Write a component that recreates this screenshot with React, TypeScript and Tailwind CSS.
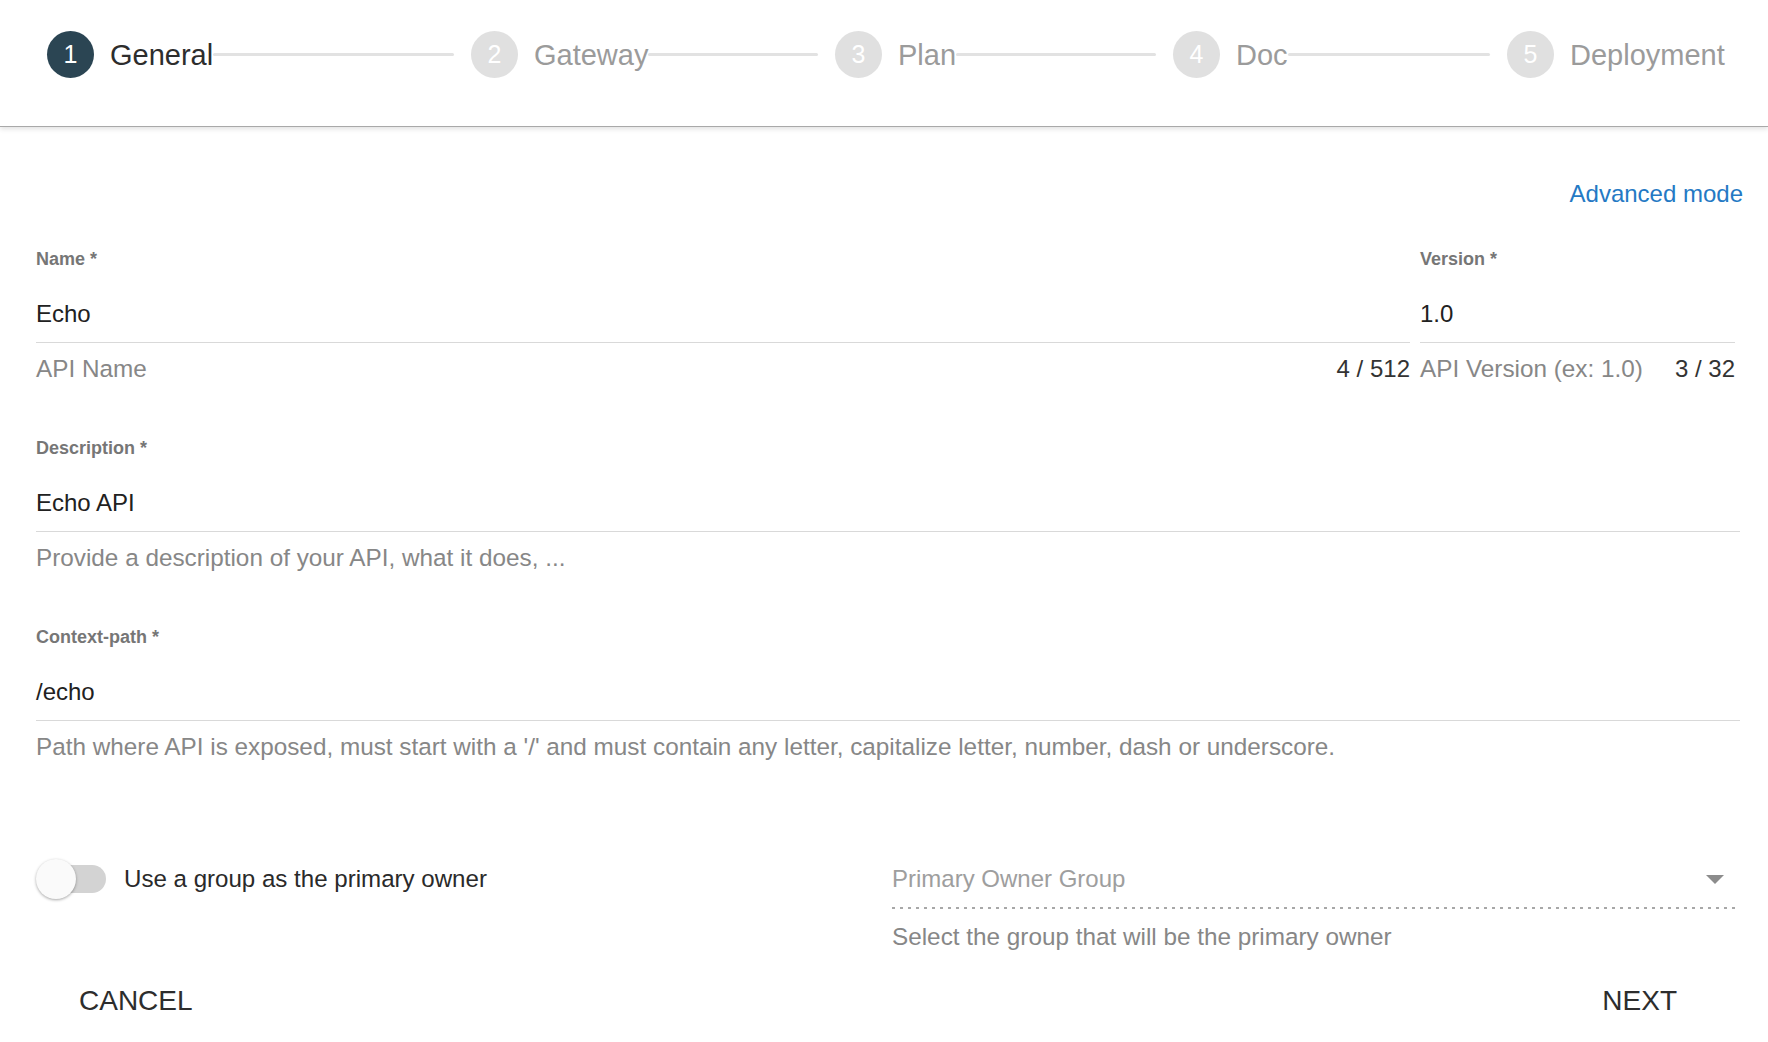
import React from "react";

const steps = [
  { n: 1, label: "General", active: true, w: "w-[424px]" },
  { n: 2, label: "Gateway", active: false, w: "w-[364px]" },
  { n: 3, label: "Plan", active: false, w: "w-[338px]" },
  { n: 4, label: "Doc", active: false, w: "w-[334px]" },
  { n: 5, label: "Deployment", active: false, w: "" },
];

function Stepper() {
  return (
    <header className="h-[127px] pt-[31px] pl-[47px] pr-[36px] flex items-start border-b border-[#a9a9a9] shadow-[0_2px_5px_rgba(0,0,0,0.12)] bg-white">
      {steps.map((s, i) => (
        <div key={s.n} className={`flex items-center shrink-0 ${s.w}`}>
          <div
            className={`w-[47px] h-[47px] rounded-full flex items-center justify-center text-white text-[25px] shrink-0 ${
              s.active ? "bg-[#2b4553]" : "bg-[#e0e0e0]"
            }`}
          >
            {s.n}
          </div>
          <span
            className={`ml-4 text-[29px] leading-[34px] whitespace-nowrap ${
              s.active ? "text-[#2d2d2d]" : "text-[#9b9b9b]"
            }`}
          >
            {s.label}
          </span>
          {i < steps.length - 1 && <div className="flex-1 h-[3px] bg-[#e2e2e2] mr-[17px] rounded-full" />}
        </div>
      ))}
    </header>
  );
}

function Field({
  label,
  value,
  hint,
  counter,
  className = "",
}: {
  label: string;
  value: string;
  hint: string;
  counter?: string;
  className?: string;
}) {
  return (
    <div className={className}>
      <div className="text-[18px] leading-[22px] font-bold text-[#767676]">{label}</div>
      <div className="mt-[29px] pb-[13px] border-b border-[#d9d9d9] text-[24px] leading-[30px] text-[#212121]">
        {value}
      </div>
      <div className="mt-[11px] flex justify-between text-[24.3px] leading-[30px] text-[#878787]">
        <span className="whitespace-nowrap">{hint}</span>
        {counter && <span className="text-[#333333] text-[24px] whitespace-nowrap">{counter}</span>}
      </div>
    </div>
  );
}

export default function App() {
  return (
    <div className="min-h-screen bg-white font-['Liberation_Sans',Arial,sans-serif]">
      <Stepper />

      <main className="pt-[53px] pl-9 pr-7">
        <div className="flex justify-end">
          <a className="text-[24px] leading-[28px] text-[#2479c4] cursor-pointer mr-[-3px]">Advanced mode</a>
        </div>

        <div className="mt-10 flex gap-[10px]">
          <Field className="flex-1" label="Name *" value="Echo" hint="API Name" counter="4 / 512" />
          <Field className="w-[320px] pr-[5px]" label="Version *" value="1.0" hint="API Version (ex: 1.0)" counter="3 / 32" />
        </div>

        <Field className="mt-[53px]" label="Description *" value="Echo API" hint="Provide a description of your API, what it does, ..." />

        <Field
          className="mt-[53px]"
          label="Context-path *"
          value="/echo"
          hint="Path where API is exposed, must start with a '/' and must contain any letter, capitalize letter, number, dash or underscore."
        />

        <div className="mt-[102px] grid grid-cols-2 gap-2">
          <div className="flex items-start">
            <div className="flex items-center h-[30px]">
              <div className="relative w-[70px] h-10">
                <div className="absolute left-1 top-[6px] w-[66px] h-7 rounded-full bg-[#d3d3d3]" />
                <div className="absolute left-0 top-0 w-10 h-10 rounded-full bg-[#fafafa] shadow-[0_1px_3px_rgba(0,0,0,0.35)]" />
              </div>
              <span className="ml-[18px] text-[24.1px] leading-[30px] text-[#2a2a2a]">Use a group as the primary owner</span>
            </div>
          </div>

          <div>
            <div className="flex items-center justify-between text-[24px] leading-[30px] text-[#9e9e9e]">
              <span>Primary Owner Group</span>
              <span className="mr-[16px] w-0 h-0 border-l-[9px] border-r-[9px] border-t-[9px] border-l-transparent border-r-transparent border-t-[#8c8c8c]" />
            </div>
            <div className="mt-[13px] mr-[5px] h-[2px] bg-[linear-gradient(to_right,#a8a8a8_3px,transparent_3px)] bg-[length:8px_2px] bg-repeat-x" />
            <div className="mt-[13px] text-[24.3px] leading-[30px] text-[#878787]">Select the group that will be the primary owner</div>
          </div>
        </div>

        <div className="mt-[32px] flex justify-between pl-[43px] pr-[63px]">
          <button className="text-[28px] leading-[34px] font-medium text-[#2d2d2d]">CANCEL</button>
          <button className="text-[28px] leading-[34px] font-medium text-[#2d2d2d]">NEXT</button>
        </div>
      </main>
    </div>
  );
}
